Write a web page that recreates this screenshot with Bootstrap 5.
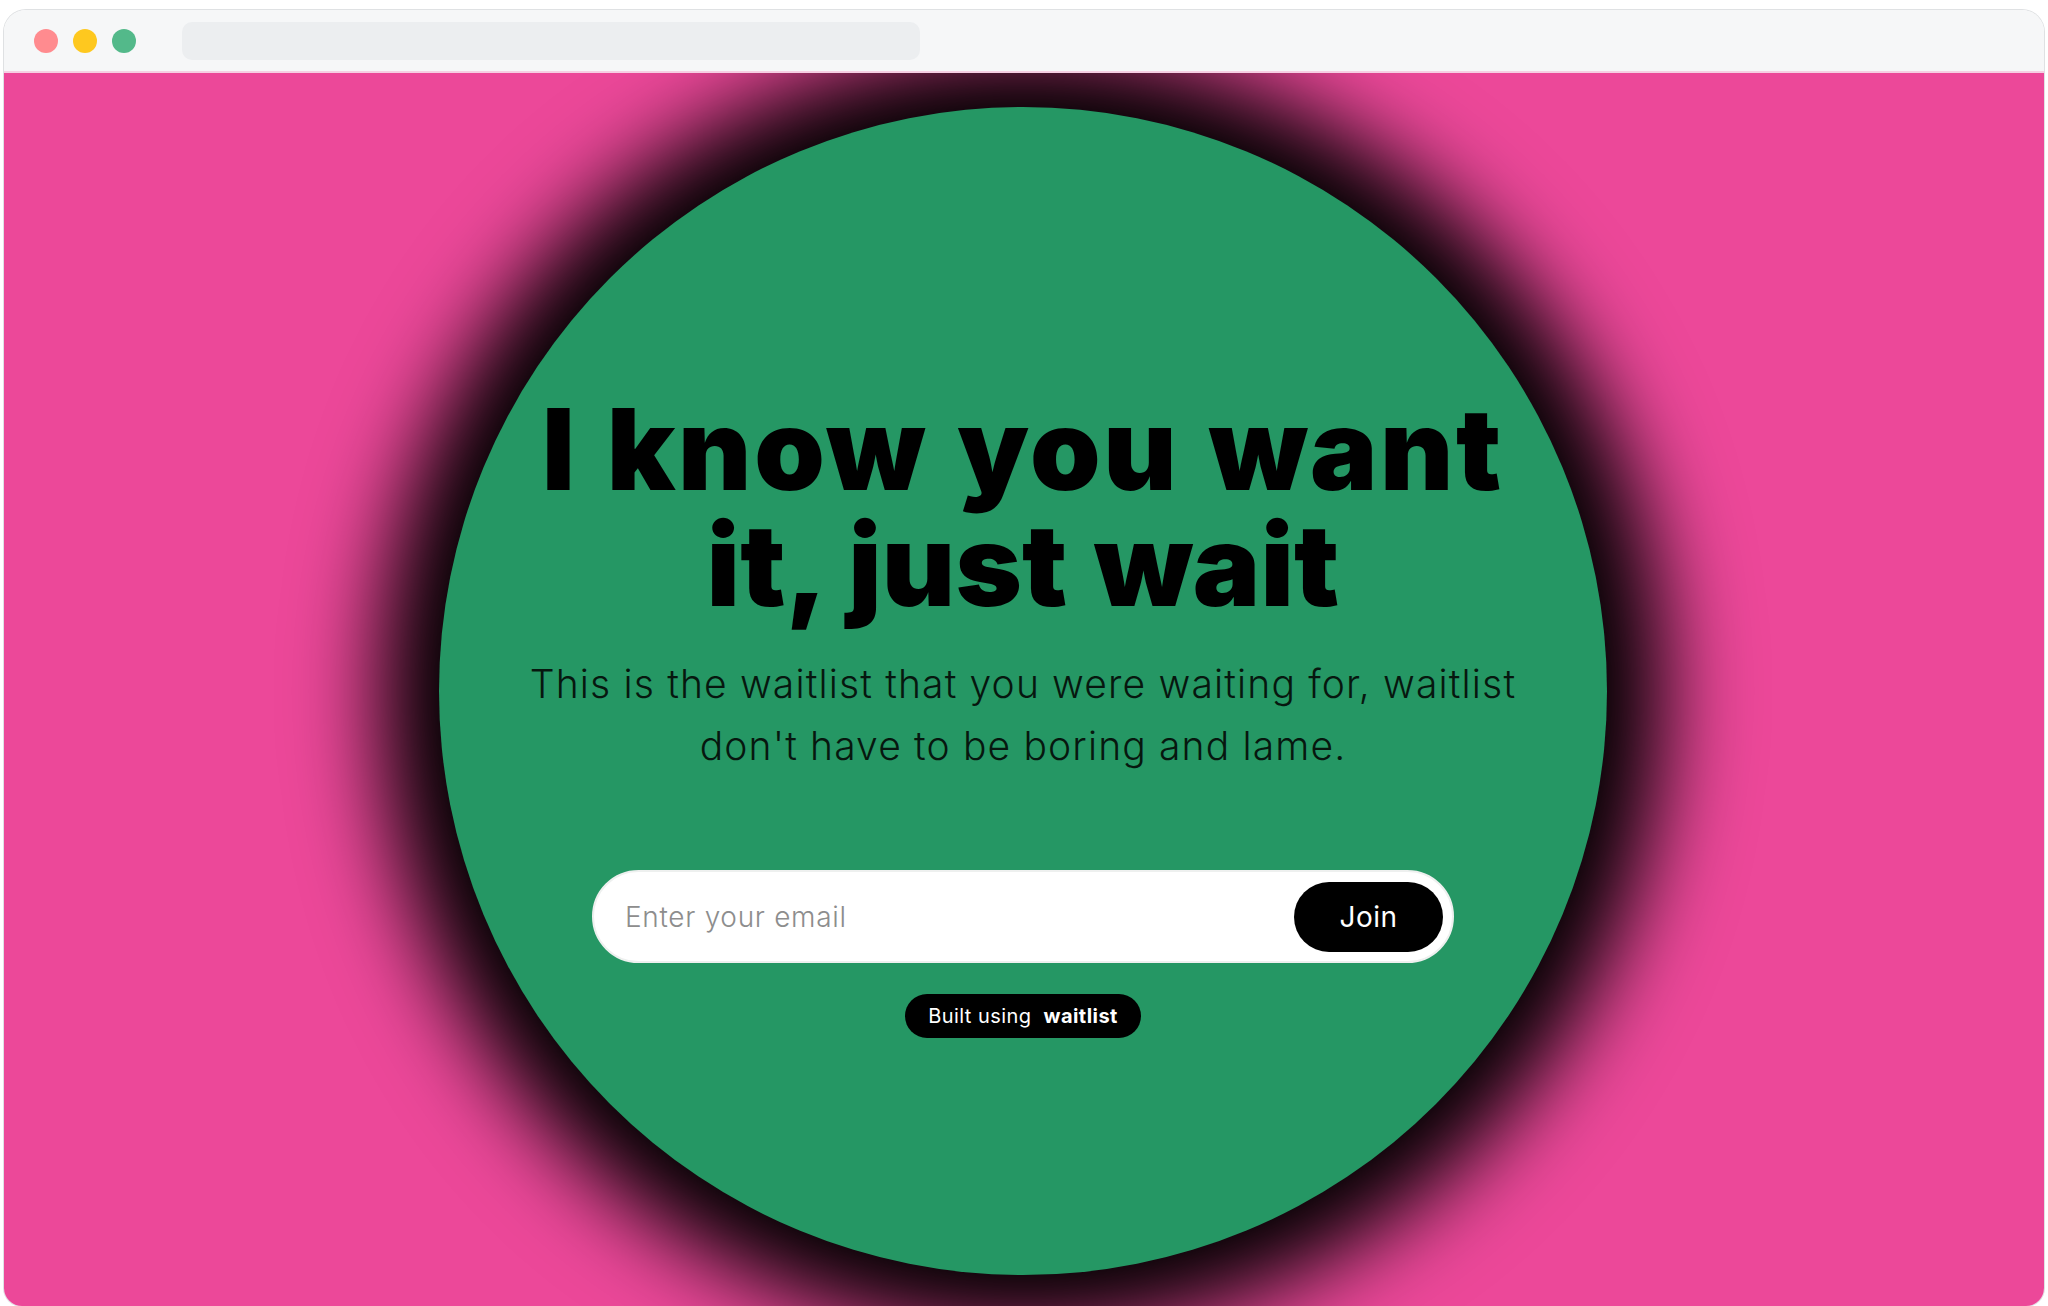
<!doctype html>
<html lang="en">
<head>
<meta charset="utf-8">
<title>Waitlist</title>
<link href="https://cdn.jsdelivr.net/npm/bootstrap@5.3.0/dist/css/bootstrap.min.css" rel="stylesheet">
<style>
html, body { height: 1306px; overflow: hidden; background: #fff; }
body { padding: 10px 4px 0 4px; font-family: Inter, "Liberation Sans", sans-serif; }
.frame { height: 1296px; border-radius: 22px 22px 18px 18px; overflow: hidden; box-shadow: 0 0 0 1px #dfe1e3; }
.chrome { height: 63px; background: #f6f7f8; padding: 1px 0 0 30px; border-bottom: 2px solid #f6cfe3; }
.dot { width: 24px; height: 24px; border-radius: 50%; }
.dot-r { background: #ff8b8f; }
.dot-y { background: #fec81f; }
.dot-g { background: #53b98a; }
.dots { gap: 15px; }
.addr { width: 738px; height: 38px; margin-left: 46px; background: #eceef0; border-radius: 10px; }
.stage { height: 1233px; background: #ec4899; overflow: hidden; padding-top: 34px; }
.disc { width: 1168px; height: 1168px; flex: none; border-radius: 50%; background: #259764; box-shadow: 0 0 90px 58px #000; margin-left: -2px; padding-top: 284px; }
.head { font-family: Inter, sans-serif; font-size: 113px; font-weight: 900; line-height: 116px; word-spacing: 4px; color: #000; margin: 0; white-space: nowrap; }
.line-a { letter-spacing: 2.7px; }
.line-b { letter-spacing: .2px; }
.sub { font-size: 39px; font-weight: 300; line-height: 62px; letter-spacing: 1.15px; color: #07170f; margin: 30px 0 0; white-space: nowrap; }
.signup { width: 862px; height: 93px; margin-top: 93px; border: 2px solid #eef0ef; padding: 10px 9px 10px 31px; }
.signup .form-control { font-size: 28px; font-weight: 300; letter-spacing: .7px; padding: 0; color: #000; box-shadow: none; }
.signup .form-control::placeholder { color: #8d8d8d; }
.go { width: 149px; height: 70px; flex: none; background: #000; border: 0; color: #fff; font-size: 28px; font-weight: 400; letter-spacing: .5px; padding: 0; }
.go:hover { background: #000; color: #fff; }
.built { height: 44px; width: 236px; margin-top: 31px; background: #000; color: #fff; font-size: 20px; letter-spacing: .45px; gap: 12px; }
.built b { font-weight: 700; }
</style>
</head>
<body>
<div class="frame">
  <div class="chrome d-flex align-items-center">
    <div class="dots d-flex">
      <span class="dot dot-r"></span><span class="dot dot-y"></span><span class="dot dot-g"></span>
    </div>
    <div class="addr"></div>
  </div>
  <div class="stage d-flex justify-content-center">
    <div class="disc d-flex flex-column align-items-center text-center">
      <h1 class="head"><span class="line-a d-block">I know you want</span><span class="line-b d-block">it, just wait</span></h1>
      <p class="sub">This is the waitlist that you were waiting for, waitlist<br>don't have to be boring and lame.</p>
      <form class="signup d-flex align-items-center rounded-pill bg-white">
        <input class="form-control border-0 bg-transparent" type="email" placeholder="Enter your email" aria-label="Email">
        <button class="btn go rounded-pill" type="button">Join</button>
      </form>
      <div class="built d-flex align-items-center justify-content-center rounded-pill">
        <span>Built using</span><b>waitlist</b>
      </div>
    </div>
  </div>
</div>
<script src="https://cdn.jsdelivr.net/npm/bootstrap@5.3.0/dist/js/bootstrap.bundle.min.js"></script>
</body>
</html>
